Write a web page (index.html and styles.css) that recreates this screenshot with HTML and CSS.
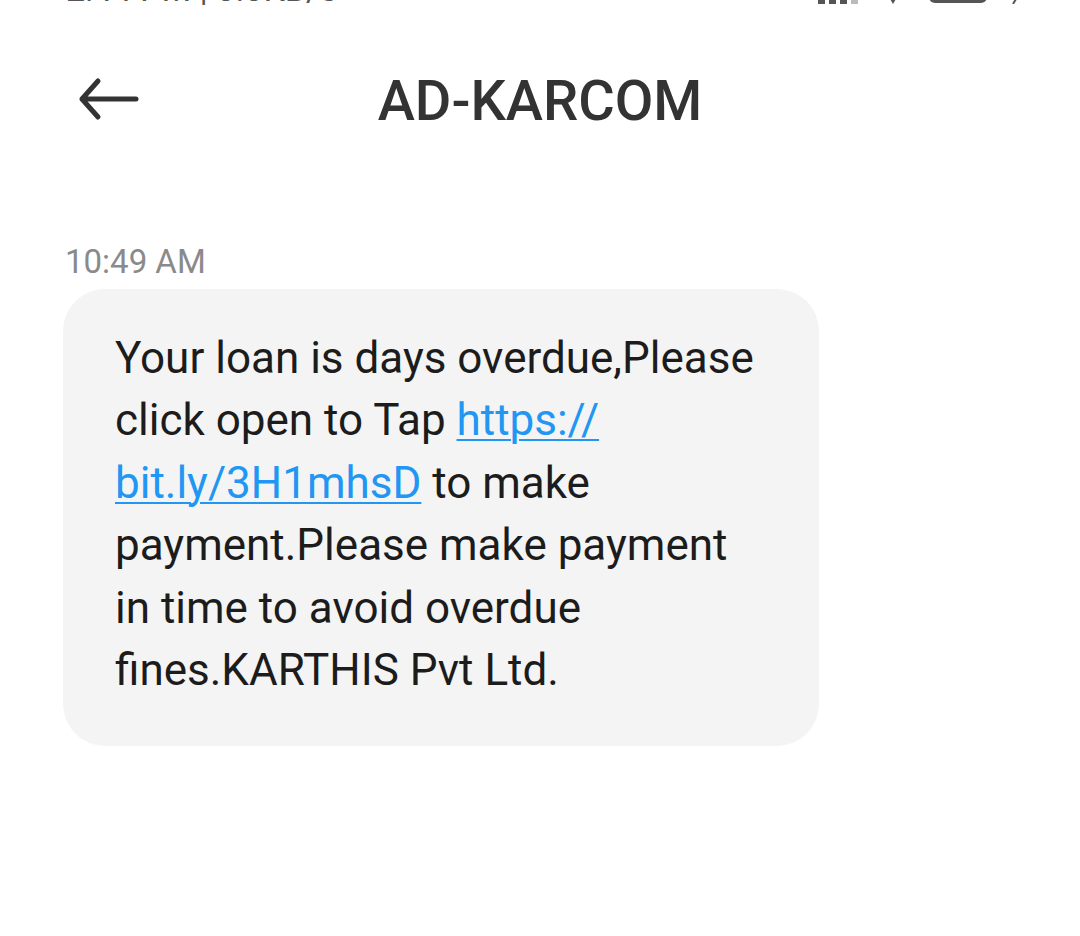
FILE: index.html
```html
<!DOCTYPE html>
<html lang="en">
<head>
<meta charset="utf-8">
<title>AD-KARCOM</title>
<link rel="stylesheet" href="styles.css">
</head>
<body>
<div class="screen">
  <div class="status">
    <span class="status-text">2:44 PM | 0.0KB/s</span>
    <div class="status-icons">
      <svg class="sig" width="40" height="30" viewBox="0 0 40 30"><rect x="0" y="18" width="7" height="12" fill="#555"/><rect x="11" y="12" width="7" height="18" fill="#555"/><rect x="22" y="6" width="7" height="24" fill="#555"/><rect x="33" y="0" width="7" height="30" fill="#bbb"/></svg>
      <svg class="wifi" width="30" height="30" viewBox="0 0 30 30"><path d="M2 8 A20 20 0 0 1 28 8 L15 30 Z" fill="#555"/></svg>
      <svg class="batt" width="62" height="30" viewBox="0 0 62 30"><rect x="1" y="1" width="58" height="28" rx="6" fill="#555"/></svg>
      <svg class="bolt" width="10" height="30" viewBox="0 0 10 30"><path d="M9 20 L3 30" stroke="#555" stroke-width="2"/></svg>
    </div>
  </div>
  <header class="topbar">
    <svg class="back" width="64" height="44" viewBox="0 0 64 44"><path d="M6 22 H60 M6 22 L22 4 M6 22 L22 40" fill="none" stroke="#333" stroke-width="5" stroke-linecap="round" stroke-linejoin="round"/></svg>
    <h1 class="title">AD-KARCOM</h1>
  </header>
  <main class="thread">
    <div class="time">10:49 AM</div>
    <div class="bubble">Your loan is days overdue,Please click open to Tap <a class="link" href="#">https://<wbr>bit.ly/3H1mhsD</a> to make payment.Please make payment in time to avoid overdue fines.KARTHIS Pvt Ltd.</div>
  </main>
</div>
</body>
</html>
```

FILE: styles.css
```css
html, body {
  margin: 0;
  padding: 0;
  background: #ffffff;
}
body {
  font-family: Roboto, "Noto Sans", sans-serif;
  color: #1f1f1f;
}
.screen {
  width: 1080px;
  height: 936px;
  overflow: hidden;
}
.status {
  height: 40px;
  margin-top: -36px;
  display: flex;
  align-items: flex-end;
  justify-content: space-between;
  padding: 0 60px 0 66px;
}
.status-text {
  font-size: 34px;
  line-height: 34px;
  color: #555;
  margin-bottom: -2px;
}
.status-icons {
  display: flex;
  align-items: flex-end;
  gap: 20px;
}
.status-icons svg { display: block; }
.topbar {
  position: relative;
  height: 120px;
  margin-top: 37px;
  display: flex;
  align-items: center;
  justify-content: center;
}
.back {
  position: absolute;
  left: 76px;
  top: 36px;
}
.title {
  margin: 0;
  font-size: 56px;
  font-weight: 500;
  color: #333333;
  letter-spacing: 0;
}
.thread {
  padding: 81px 0 0 63px;
}
.time {
  font-size: 33px;
  line-height: 40px;
  color: #8a8a8a;
  padding-left: 2px;
}
.bubble {
  margin-top: 7px;
  width: 650px;
  padding: 38px 54px 45px 52px;
  background: #f4f4f4;
  border-radius: 42px;
  font-size: 44px;
  line-height: 62.4px;
  color: #1c1c1c;
}
.link {
  color: #2196f3;
  text-decoration: underline;
  text-decoration-thickness: 2px;
  text-underline-offset: 4px;
}
```
